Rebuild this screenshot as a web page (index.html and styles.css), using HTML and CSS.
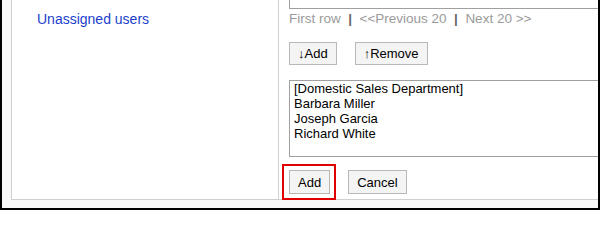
FILE: index.html
```html
<!DOCTYPE html>
<html>
<head>
<meta charset="utf-8">
<link rel="stylesheet" href="styles.css">
</head>
<body>
<div class="frame">
  <div class="grid">
    <div class="label-cell">
      <a class="link" href="#">Unassigned users</a>
    </div>
    <div class="field-cell">
      <div class="prev-box"></div>
      <div class="pager">
        <span>First row</span><span class="sep">|</span><span>&lt;&lt;Previous 20</span><span class="sep">|</span><span>Next 20 &gt;&gt;</span>
      </div>
      <div class="btn-row move-row">
        <button class="btn" type="button">↓Add</button>
        <button class="btn" type="button">↑Remove</button>
      </div>
      <div class="listbox">
        <div class="opt">[Domestic Sales Department]</div>
        <div class="opt">Barbara Miller</div>
        <div class="opt">Joseph Garcia</div>
        <div class="opt">Richard White</div>
      </div>
      <div class="btn-row submit-row">
        <span class="highlight"><button class="btn" type="button">Add</button></span>
        <button class="btn" type="button">Cancel</button>
      </div>
    </div>
  </div>
</div>
</body>
</html>
```
FILE: styles.css
```css
html, body {
  margin: 0;
  padding: 0;
  background: #ffffff;
}

.frame {
  box-sizing: border-box;
  width: 600px;
  height: 210px;
  border-left: 2px solid #000;
  border-right: 2px solid #000;
  border-bottom: 2px solid #000;
  background: #f9f9f9;
  padding: 0 0 8px 9px;
  overflow: hidden;
  font-family: "Liberation Sans", Arial, sans-serif;
  font-size: 13px;
  color: #000;
}

.grid {
  display: flex;
  box-sizing: border-box;
  height: 200px;
  width: 620px;
  background: #fff;
  border-left: 1px solid #d0d0d0;
  border-bottom: 1px solid #d0d0d0;
}

.label-cell {
  box-sizing: border-box;
  width: 267px;
  flex: none;
  border-right: 1px solid #d0d0d0;
  padding: 11px 0 0 25px;
}

.link {
  font-size: 14px;
  line-height: 16px;
  color: #1a3fcc;
  text-decoration: none;
}

.field-cell {
  flex: 1;
  padding-left: 10px;
  display: flex;
  flex-direction: column;
  align-items: flex-start;
}

.prev-box {
  box-sizing: border-box;
  width: 400px;
  height: 9px;
  border-left: 1px solid #a0a0a0;
  border-bottom: 1px solid #a0a0a0;
  flex: none;
}

.pager {
  margin-top: 2px;
  font-size: 13.5px;
  line-height: 15px;
  color: #9a9a9a;
  white-space: nowrap;
}

.sep {
  color: #666;
  font-weight: bold;
  padding: 0 7.5px;
}

.btn-row {
  display: flex;
  gap: 18px;
}

.move-row {
  margin-top: 16px;
}

.btn {
  box-sizing: border-box;
  height: 23px;
  padding: 0 8px;
  margin: 0;
  border: 1px solid #b8b8b8;
  border-radius: 0;
  background: #f4f4f4;
  font-family: "Liberation Sans", Arial, sans-serif;
  font-size: 13px;
  color: #000;
  line-height: 21px;
}

.listbox {
  box-sizing: border-box;
  margin-top: 15px;
  width: 400px;
  height: 77px;
  border: 1px solid #a0a0a0;
  padding: 0 4px;
  line-height: 15px;
}

.opt {
  white-space: nowrap;
}

.submit-row {
  margin-top: 13px;
}

.submit-row .btn {
  height: 24px;
}

.highlight {
  position: relative;
  display: inline-block;
}

.highlight::after {
  content: "";
  position: absolute;
  top: -6px;
  left: -7px;
  right: -6px;
  bottom: -6px;
  border: 2px solid #e00000;
  pointer-events: none;
}
```
